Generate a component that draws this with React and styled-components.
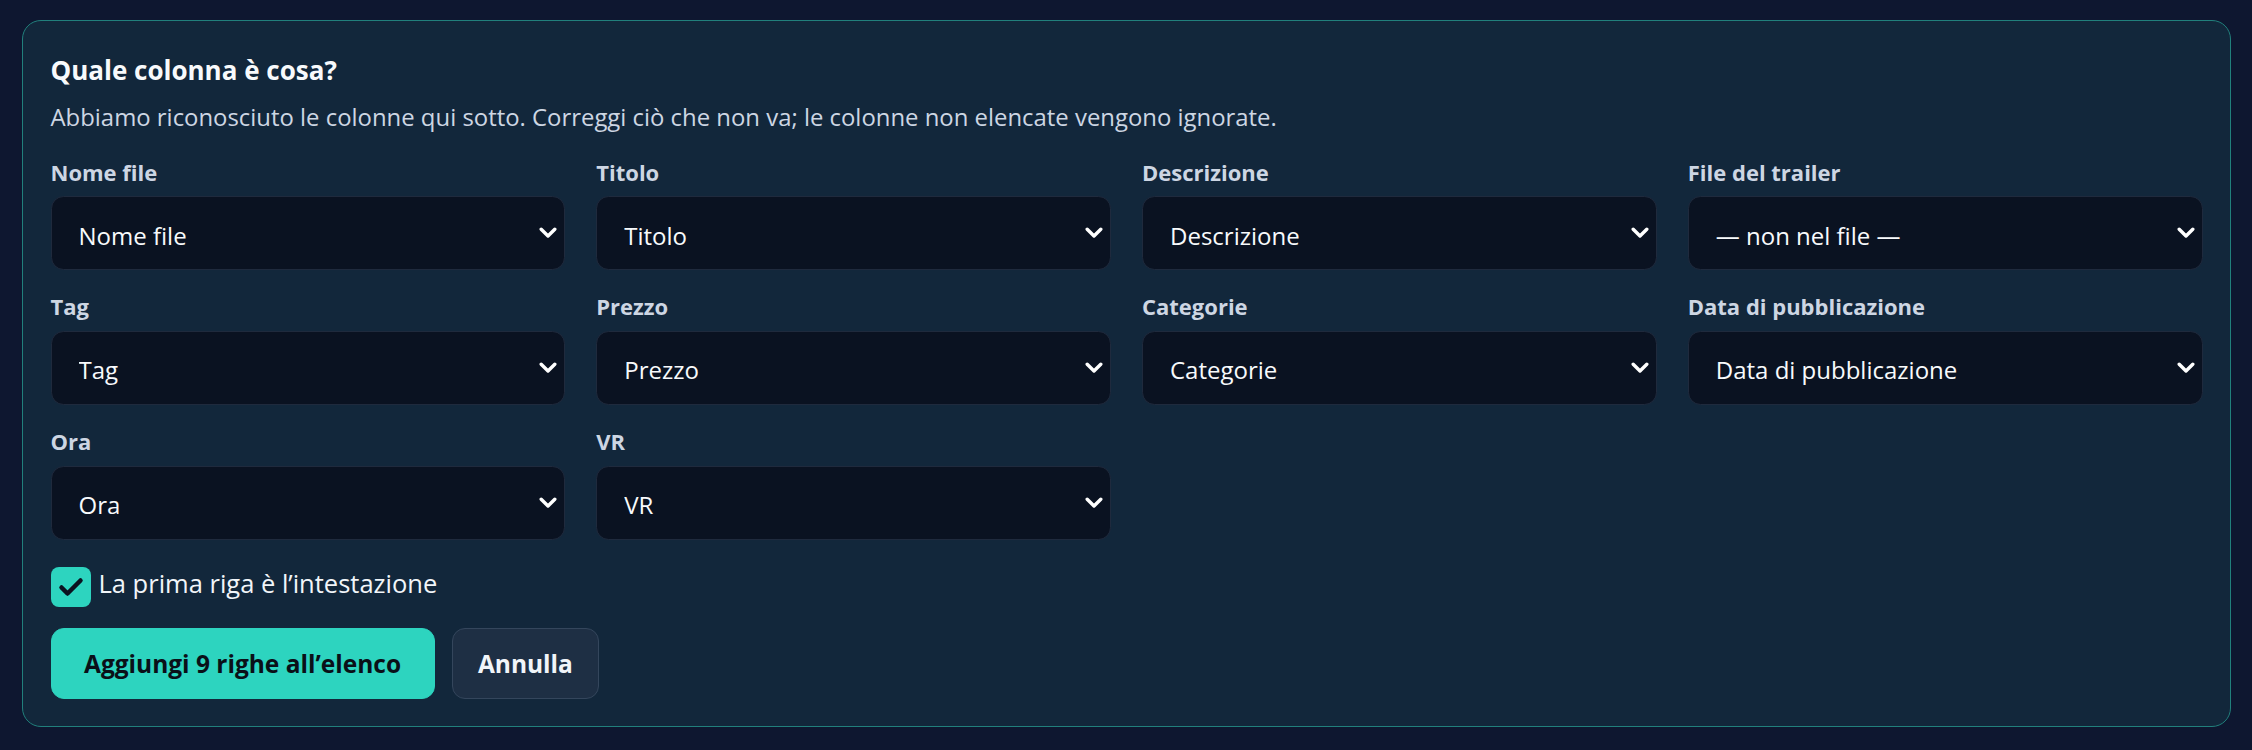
import React, { useState } from "react";
import styled, { createGlobalStyle } from "styled-components";

const FONT = `"Open Sans", "Noto Sans", sans-serif`;

const GlobalStyle = createGlobalStyle`
  html, body { margin: 0; padding: 0; background: #0e1730; }
  body { font-family: ${FONT}; -webkit-font-smoothing: antialiased; }
  * { box-sizing: border-box; }
`;

const Page = styled.div`
  padding: 19.5px 21px 21px 21.5px;
`;

const Card = styled.section`
  background: #12273b;
  border: 1.5px solid #21807c;
  border-radius: 19px;
  padding: 31.5px 27.5px 26.8px 28px;
  display: flex;
  flex-direction: column;
`;

const Title = styled.h2`
  margin: 0;
  font-size: 26px;
  line-height: 36px;
  font-weight: 700;
  color: #f8fafc;
`;

const Lead = styled.p`
  margin: 12.4px 0 0;
  font-size: 23.9px;
  line-height: 34px;
  color: #cdd6e3;
`;

const Grid = styled.div`
  margin-top: 22.2px;
  display: grid;
  grid-template-columns: repeat(4, minmax(0, 1fr));
  column-gap: 31px;
  row-gap: 21px;
`;

const Field = styled.label`
  display: flex;
  flex-direction: column;
  gap: 9.7px;
`;

const FieldLabel = styled.span`
  font-size: 22px;
  line-height: 30px;
  font-weight: 700;
  color: #cdd6e3;
`;

const SelectWrap = styled.div`
  position: relative;
`;

const Select = styled.select`
  appearance: none;
  -webkit-appearance: none;
  display: block;
  width: 100%;
  height: 74px;
  margin: 0;
  padding: 4px 50px 0 27px;
  background: #0a1221;
  border: 1.5px solid #1f2a3d;
  border-radius: 12.5px;
  color: #f8fafc;
  font-family: ${FONT};
  font-size: 24px;
  outline: none;
  cursor: pointer;
`;

const Chevron = styled.svg`
  position: absolute;
  right: 8px;
  top: 50%;
  width: 18px;
  height: 12px;
  margin-top: -6px;
  pointer-events: none;
`;

const CheckRow = styled.label`
  margin-top: 27.7px;
  display: flex;
  align-items: flex-start;
  gap: 8px;
  cursor: pointer;
`;

const HiddenInput = styled.input`
  position: absolute;
  opacity: 0;
  width: 0;
  height: 0;
`;

const Box = styled.span`
  width: 40px;
  height: 40px;
  border-radius: 8px;
  background: ${(p) => (p.$checked ? "#2dd4bf" : "#0a1221")};
  display: flex;
  align-items: center;
  justify-content: center;
  flex: none;
`;

const CheckText = styled.span`
  margin-top: -1.6px;
  font-size: 25.5px;
  line-height: 34px;
  color: #f1f5f9;
`;

const Actions = styled.div`
  margin-top: 20.6px;
  display: flex;
  gap: 17px;
`;

const Button = styled.button`
  height: 71.4px;
  padding: 0 ${(p) => (p.$primary ? "32.5px" : "25.3px")};
  border-radius: 13px;
  font-family: ${FONT};
  font-size: 24.5px;
  line-height: 34px;
  font-weight: 700;
  cursor: pointer;
  border: 1.5px solid ${(p) => (p.$primary ? "#2dd4bf" : "#34465c")};
  background: ${(p) => (p.$primary ? "#2dd4bf" : "#1e2f44")};
  color: ${(p) => (p.$primary ? "#0a1018" : "#f1f5f9")};
`;

const fields = [
  { label: "Nome file", value: "Nome file" },
  { label: "Titolo", value: "Titolo" },
  { label: "Descrizione", value: "Descrizione" },
  { label: "File del trailer", value: "— non nel file —" },
  { label: "Tag", value: "Tag" },
  { label: "Prezzo", value: "Prezzo" },
  { label: "Categorie", value: "Categorie" },
  { label: "Data di pubblicazione", value: "Data di pubblicazione" },
  { label: "Ora", value: "Ora" },
  { label: "VR", value: "VR" },
];

const options = [
  "— non nel file —",
  "Nome file",
  "Titolo",
  "Descrizione",
  "File del trailer",
  "Tag",
  "Prezzo",
  "Categorie",
  "Data di pubblicazione",
  "Ora",
  "VR",
];

function ChevronIcon() {
  return (
    <Chevron viewBox="0 0 18 12" aria-hidden="true">
      <polyline
        points="2.2,2.2 9,9 15.8,2.2"
        fill="none"
        stroke="#ffffff"
        strokeWidth="3.4"
        strokeLinecap="round"
        strokeLinejoin="round"
      />
    </Chevron>
  );
}

export default function App() {
  const [header, setHeader] = useState(true);
  return (
    <>
      <GlobalStyle />
      <Page>
        <Card>
          <Title>Quale colonna è cosa?</Title>
          <Lead>
            Abbiamo riconosciuto le colonne qui sotto. Correggi ciò che non va; le colonne non elencate
            vengono ignorate.
          </Lead>
          <Grid>
            {fields.map((f) => (
              <Field key={f.label}>
                <FieldLabel>{f.label}</FieldLabel>
                <SelectWrap>
                  <Select defaultValue={f.value}>
                    {options.map((o) => (
                      <option key={o} value={o}>
                        {o}
                      </option>
                    ))}
                  </Select>
                  <ChevronIcon />
                </SelectWrap>
              </Field>
            ))}
          </Grid>
          <CheckRow>
            <HiddenInput
              type="checkbox"
              checked={header}
              onChange={(e) => setHeader(e.target.checked)}
            />
            <Box $checked={header}>
              {header && (
                <svg width="40" height="40" viewBox="0 0 40 40" aria-hidden="true">
                  <polyline
                    points="10.5,20.5 16.5,26.5 29.5,13.5"
                    fill="none"
                    stroke="#0b1220"
                    strokeWidth="4.5"
                    strokeLinecap="round"
                    strokeLinejoin="round"
                  />
                </svg>
              )}
            </Box>
            <CheckText>La prima riga è l’intestazione</CheckText>
          </CheckRow>
          <Actions>
            <Button $primary>Aggiungi 9 righe all’elenco</Button>
            <Button>Annulla</Button>
          </Actions>
        </Card>
      </Page>
    </>
  );
}
